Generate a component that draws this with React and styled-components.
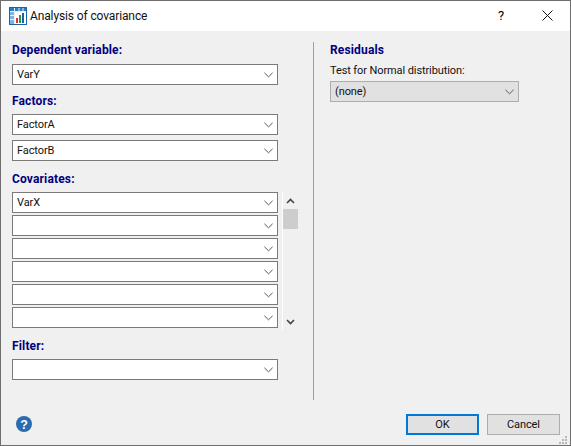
import React from 'react';
import styled, { createGlobalStyle } from 'styled-components';

const Global = createGlobalStyle`
  html, body { margin: 0; padding: 0; background: #f0f0f0; }
  * { box-sizing: border-box; }
`;

const Win = styled.div`
  width: 571px; height: 446px; display: flex; flex-direction: column;
  border: 1px solid #6e6e6e; background: #f0f0f0;
  font-family: Roboto, "Noto Sans", sans-serif; font-size: 11px; letter-spacing: -0.1px; color: #000;
  position: relative;
`;
const TitleBar = styled.div`
  height: 30px; background: #fff; display: flex; align-items: center; padding-left: 8px; flex: none;
`;
const Title = styled.div`
  font-size: 12px; letter-spacing: -0.12px; margin-left: 3px; color: #111; flex: 1;
`;
const CtlBtn = styled.div`
  width: 46px; height: 30px; display: flex; align-items: center; justify-content: center; font-size: 13px; padding-bottom: 1px;
`;
const Body = styled.div`
  flex: 1; display: flex; padding: 11px 0 0 11px; min-height: 0;
`;
const Left = styled.div`
  width: 287px; flex: none; display: flex; flex-direction: column;
`;
const Head = styled.div`
  font-weight: 700; color: #000080; font-size: 12px; height: 16px; line-height: 16px; margin-top: ${p => p.$mt || 0}px;
  margin-bottom: ${p => p.$mb || 5}px; letter-spacing: 0.15px;
`;
const Combo = styled.div`
  width: ${p => p.$w || 266}px; height: 21px; background: ${p => p.$gray ? '#e1e1e1' : '#fff'};
  border: 1px solid ${p => p.$gray ? '#adadad' : '#7a7a7a'}; display: flex; align-items: center;
  padding: 0 4px 0 4px; margin-bottom: ${p => p.$mb || 0}px; flex: none;
  justify-content: space-between; color: #111;
`;
const Chev = () => (
  <svg width="9" height="6" viewBox="0 0 9 6">
    <path d="M0.4 0.8 L4.5 4.8 L8.6 0.8" fill="none" stroke="#555" strokeWidth="1" />
  </svg>
);
const ListWrap = styled.div`
  display: flex; align-items: flex-start; width: 287px; height: 136px; flex: none;
`;
const ListCol = styled.div`
  width: 266px; display: flex; flex-direction: column; gap: 2px; flex: none;
`;
const ScrollTrack = styled.div`
  margin-left: 4px; width: 16px; height: 138px; flex: none; border-left: 1px solid #fff;
  display: flex; flex-direction: column; align-items: center;
`;
const Arrow = styled.div`
  height: 17px; width: 15px; display: flex; align-items: center; justify-content: center; flex: none;
`;
const Thumb = styled.div`
  width: 15px; height: 20px; background: #cdcdcd; flex: none;
`;
const Spacer = styled.div`flex: 1;`;
const Divider = styled.div`
  width: 1px; height: 358px; background: #a0a0a0; margin-left: 14px; flex: none;
`;
const Right = styled.div`
  margin-left: 16px; width: 189px; flex: none; display: flex; flex-direction: column;
`;
const Plain = styled.div`
  height: 16px; line-height: 16px; margin-bottom: 2px; color: #111;
`;
const Footer = styled.div`
  height: 44px; flex: none; display: flex; align-items: flex-start; padding: 13px 10px 0 15px; position: relative;
`;
const HelpIcon = styled.svg`
  margin-top: 2px; flex: none;
`;
const Btn = styled.div`
  width: 73px; height: 21px; background: #e1e1e1; border: ${p => p.$def ? '2px solid #0078d7' : '1px solid #adadad'};
  display: flex; align-items: center; justify-content: center; color: #111; margin-left: ${p => p.$ml || 0}px; flex: none;
`;
const Grip = styled.svg`
  position: absolute; right: 1px; bottom: 0;
`;

const Chart = () => (
  <svg width="18" height="18" viewBox="0 0 18 18">
    <rect x="0.5" y="0.5" width="17" height="17" fill="#7fb4e0" stroke="#1a63a8" />
    <rect x="1" y="1" width="16" height="3" fill="#2a7cc4" />
    <path d="M1 4.5H17M5.5 1V17M1 8.5H5M1 12.5H5M10 1V4M14 1V4" stroke="#e8f2fb" strokeWidth="1" />
    <rect x="6" y="5" width="11" height="12" fill="#fff" />
    <rect x="7" y="11" width="2" height="5" fill="#d8342a" />
    <rect x="10" y="8" width="2" height="8" fill="#2f9a3a" />
    <rect x="13" y="6" width="2" height="10" fill="#1c5fae" />
  </svg>
);

const Row = ({ v, mb }) => <Combo $mb={mb}><span>{v}</span><Chev /></Combo>;

export default function App() {
  return (
    <>
      <Global />
      <Win>
        <TitleBar>
          <Chart />
          <Title>Analysis of covariance</Title>
          <CtlBtn>?</CtlBtn>
          <CtlBtn>
            <svg width="11" height="11" viewBox="0 0 11 11"><path d="M0.5 0.5L10.5 10.5M10.5 0.5L0.5 10.5" stroke="#111" strokeWidth="1" /></svg>
          </CtlBtn>
        </TitleBar>
        <Body>
          <Left>
            <Head $mb={6}>Dependent variable:</Head>
            <Row v="VarY" />
            <Head $mt={8} $mb={5}>Factors:</Head>
            <Row v="FactorA" mb={5} />
            <Row v="FactorB" />
            <Head $mt={10} $mb={5}>Covariates:</Head>
            <ListWrap>
              <ListCol>
                <Row v="VarX" /><Row /><Row /><Row /><Row /><Row />
              </ListCol>
              <ScrollTrack>
                <Arrow>
                  <svg width="9" height="6" viewBox="0 0 9 6"><path d="M1 5L4.5 1.5L8 5" fill="none" stroke="#444" strokeWidth="1.6" /></svg>
                </Arrow>
                <Thumb />
                <Spacer />
                <Arrow>
                  <svg width="9" height="6" viewBox="0 0 9 6"><path d="M1 1L4.5 4.5L8 1" fill="none" stroke="#444" strokeWidth="1.6" /></svg>
                </Arrow>
              </ScrollTrack>
            </ListWrap>
            <Head $mt={10} $mb={5}>Filter:</Head>
            <Row />
          </Left>
          <Divider />
          <Right>
            <Head>Residuals</Head>
            <Plain>Test for Normal distribution:</Plain>
            <Combo $gray $w={189}><span>(none)</span><Chev /></Combo>
          </Right>
        </Body>
        <Footer>
          <HelpIcon width="16" height="16" viewBox="0 0 16 16">
            <circle cx="8" cy="8" r="8" fill="#2a6cb0" />
            <text x="8" y="12.5" textAnchor="middle" fontSize="12.5" fontWeight="700" fill="#fff" fontFamily="Liberation Sans">?</text>
          </HelpIcon>
          <Spacer />
          <Btn $def>OK</Btn>
          <Btn $ml={8}>Cancel</Btn>
          <Grip width="12" height="10" viewBox="0 0 12 10">
            <path d="M8 1h2v2H8zM5 4h2v2H5zM8 4h2v2H8zM2 7h2v2H2zM5 7h2v2H5zM8 7h2v2H8z" fill="#b8b8b8" />
          </Grip>
        </Footer>
      </Win>
    </>
  );
}
